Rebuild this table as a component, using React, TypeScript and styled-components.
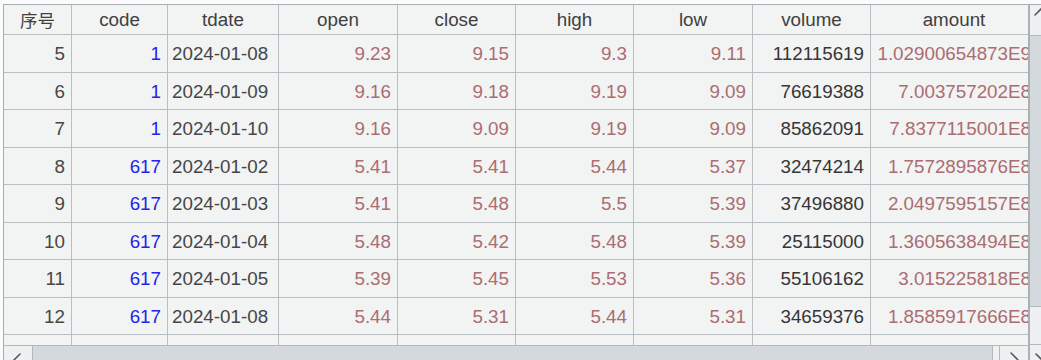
import React from "react";
import styled, { createGlobalStyle } from "styled-components";

const GlobalStyle = createGlobalStyle`
  html, body {
    margin: 0;
    padding: 0;
    overflow: hidden;
    background: #fbfbfb;
  }
  body {
    font-family: "Liberation Sans", "Noto Sans CJK SC", Arial, sans-serif;
  }
`;

const LINE = "#b8bfc4";
const FRAME = "#a7afb5";

const Page = styled.div`
  box-sizing: border-box;
  width: 1041px;
  height: 360px;
  padding: 4px 0 0 3px;
  overflow: hidden;
`;

const Frame = styled.div`
  display: grid;
  grid-template-columns: 1024px 30px;
  grid-template-rows: 340px 30px;
  border-top: 1px solid ${FRAME};
  border-left: 1px solid ${FRAME};
  background: #f2f3f3;
  width: max-content;
`;

const Viewport = styled.div`
  overflow: hidden;
  grid-column: 1;
  grid-row: 1;
`;

const Table = styled.div`
  display: flex;
  flex-direction: column;
  width: max-content;
`;

const HeaderRow = styled.div`
  display: flex;
  height: 30px;
  box-sizing: border-box;
  border-bottom: 1px solid ${LINE};
`;

const Row = styled.div`
  display: flex;
  height: 37.5px;
  box-sizing: border-box;
  border-bottom: 1px solid ${LINE};
  flex-shrink: 0;
`;

type Tone = "idx" | "code" | "date" | "num" | "vol" | "head";

const toneColor: Record<Tone, string> = {
  idx: "#474747",
  code: "#2323ec",
  date: "#464646",
  num: "#ab6d71",
  vol: "#363636",
  head: "#404040",
};

const Cell = styled.div<{ $w: number; $align: "left" | "right" | "center"; $tone: Tone }>`
  box-sizing: border-box;
  flex: 0 0 ${(p) => p.$w}px;
  width: ${(p) => p.$w}px;
  border-right: 1px solid ${LINE};
  display: flex;
  align-items: center;
  justify-content: ${(p) =>
    p.$align === "left" ? "flex-start" : p.$align === "right" ? "flex-end" : "center"};
  padding: ${(p) => (p.$tone === "head" ? "0" : "2px 0 0 0")};
  padding-left: ${(p) => (p.$align === "left" ? 4 : 0)}px;
  padding-right: ${(p) => (p.$align === "right" ? 6 : 0)}px;
  font-size: 18.8px;
  color: ${(p) => toneColor[p.$tone]};
  white-space: nowrap;
  overflow: hidden;
`;

const HeadLabel = styled.span<{ $cjk?: boolean }>`
  font-size: ${(p) => (p.$cjk ? "17.5px" : "18.8px")};
`;

const HScroll = styled.div`
  grid-column: 1;
  grid-row: 2;
  display: flex;
  border-top: 1px solid #b2b9be;
  background: #eef0f1;
`;

const ArrowButton = styled.div<{ $side: "left" | "right" }>`
  box-sizing: border-box;
  flex: 0 0 ${(p) => (p.$side === "left" ? 28 : 29)}px;
  height: 100%;
  background: #eef0f1;
  border-${(p) => (p.$side === "left" ? "right" : "left")}: 1px solid #b2b9be;
  display: flex;
`;

const HTrack = styled.div`
  flex: 1;
  display: flex;
  background: #eef0f1;
`;

const HThumb = styled.div`
  box-sizing: border-box;
  width: 960px;
  height: 100%;
  background: #d4d9dd;
  border-right: 1px solid #b2b9be;
`;

const VScroll = styled.div`
  grid-column: 2;
  grid-row: 1 / 3;
  display: flex;
  flex-direction: column;
  border-left: 2px solid #a9b1b6;
  background: #eef0f1;
  width: 28px;
`;

const VButton = styled.div<{ $end: "top" | "bottom" }>`
  box-sizing: border-box;
  flex: 0 0 30px;
  background: #eef0f1;
  border-${(p) => (p.$end === "top" ? "bottom" : "top")}: 1px solid #b2b9be;
  display: flex;
`;

const VTrack = styled.div`
  flex: 1;
  display: flex;
  flex-direction: column;
`;

const VThumb = styled.div`
  height: 270px;
  background: #d4d9dd;
  border-bottom: 1px solid #b2b9be;
`;

const Chevron: React.FC<{ d: string }> = ({ d }) => (
  <svg width="28" height="30" viewBox="0 0 28 30">
    <path d={d} fill="none" stroke="#555a5e" strokeWidth="1.6" strokeLinecap="round" strokeLinejoin="round" />
  </svg>
);

type Col = { key: string; label: string; w: number; align: "left" | "right"; tone: Tone };

const cols: Col[] = [
  { key: "idx", label: "序号", w: 68, align: "right", tone: "idx" },
  { key: "code", label: "code", w: 96, align: "right", tone: "code" },
  { key: "tdate", label: "tdate", w: 111, align: "left", tone: "date" },
  { key: "open", label: "open", w: 119, align: "right", tone: "num" },
  { key: "close", label: "close", w: 118, align: "right", tone: "num" },
  { key: "high", label: "high", w: 118, align: "right", tone: "num" },
  { key: "low", label: "low", w: 119, align: "right", tone: "num" },
  { key: "volume", label: "volume", w: 118, align: "right", tone: "vol" },
  { key: "amount", label: "amount", w: 167, align: "right", tone: "num" },
];

const rows: string[][] = [
  ["5", "1", "2024-01-08", "9.23", "9.15", "9.3", "9.11", "112115619", "1.02900654873E9"],
  ["6", "1", "2024-01-09", "9.16", "9.18", "9.19", "9.09", "76619388", "7.003757202E8"],
  ["7", "1", "2024-01-10", "9.16", "9.09", "9.19", "9.09", "85862091", "7.8377115001E8"],
  ["8", "617", "2024-01-02", "5.41", "5.41", "5.44", "5.37", "32474214", "1.7572895876E8"],
  ["9", "617", "2024-01-03", "5.41", "5.48", "5.5", "5.39", "37496880", "2.0497595157E8"],
  ["10", "617", "2024-01-04", "5.48", "5.42", "5.48", "5.39", "25115000", "1.3605638494E8"],
  ["11", "617", "2024-01-05", "5.39", "5.45", "5.53", "5.36", "55106162", "3.015225818E8"],
  ["12", "617", "2024-01-08", "5.44", "5.31", "5.44", "5.31", "34659376", "1.8585917666E8"],
  ["", "", "", "", "", "", "", "", ""],
];

export default function App() {
  return (
    <>
      <GlobalStyle />
      <Page>
        <Frame>
          <Viewport>
            <Table>
              <HeaderRow>
                {cols.map((c) => (
                  <Cell key={c.key} $w={c.w} $align="center" $tone="head">
                    <HeadLabel $cjk={c.key === "idx"}>{c.label}</HeadLabel>
                  </Cell>
                ))}
              </HeaderRow>
              {rows.map((r, i) => (
                <Row key={i}>
                  {cols.map((c, j) => (
                    <Cell key={c.key} $w={c.w} $align={c.align} $tone={c.tone}>
                      {r[j]}
                    </Cell>
                  ))}
                </Row>
              ))}
            </Table>
          </Viewport>
          <HScroll>
            <ArrowButton $side="left">
              <Chevron d="M16 8 L9 15 L16 22" />
            </ArrowButton>
            <HTrack>
              <HThumb />
            </HTrack>
            <ArrowButton $side="right">
              <Chevron d="M11 7 L18 14 L11 21" />
            </ArrowButton>
          </HScroll>
          <VScroll>
            <VButton $end="top">
              <Chevron d="M5 10 L12 3 L19 10" />
            </VButton>
            <VTrack>
              <VThumb />
            </VTrack>
            <VButton $end="bottom">
              <Chevron d="M6 9 L13 16 L20 9" />
            </VButton>
          </VScroll>
        </Frame>
      </Page>
    </>
  );
}
